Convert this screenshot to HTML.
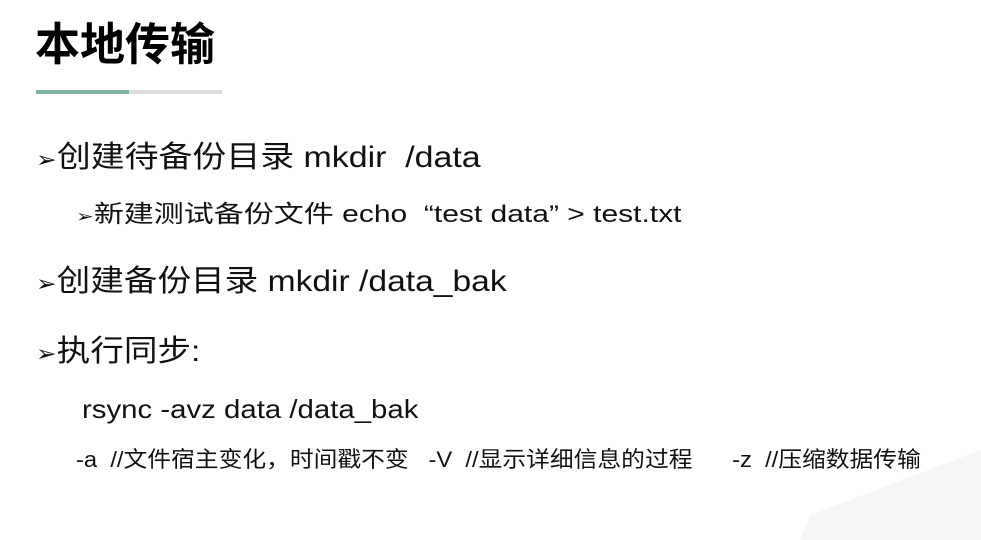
<!DOCTYPE html>
<html><head><meta charset="utf-8"><style>
html,body{margin:0;width:981px;height:540px;overflow:hidden}
body{background:#fff;position:relative;font-family:"Liberation Sans","Noto Sans CJK SC",sans-serif;color:#111}
.t{position:absolute;white-space:nowrap;line-height:1;transform-origin:left center}
.a{font-family:"DejaVu Sans",sans-serif;font-weight:bold}
</style></head><body>
<svg style="position:absolute;left:0;top:0" width="981" height="540"><polygon points="800,540 810,515 981,450 981,540" fill="#f6f6f6"/></svg>
<div class="t" style="left:35px;top:22px;font-size:45px;font-weight:bold;color:#000">本地传输</div>
<div style="position:absolute;left:36px;top:90px;width:93px;height:4px;background:#7fb5a5"></div>
<div style="position:absolute;left:129px;top:90px;width:93px;height:4px;background:#dedede"></div>
<div class="t" style="left:36px;top:143px;font-size:30px;transform:scaleX(1.13)"><span class="a" style="font-size:22px">➢</span>创建待备份目录 mkdir&nbsp; /data</div>
<div class="t" style="left:76px;top:203px;font-size:24px;transform:scaleX(1.25)"><span class="a" style="font-size:17px">➢</span>新建测试备份文件 echo&nbsp; “test data” &gt; test.txt</div>
<div class="t" style="left:36px;top:267px;font-size:30px;transform:scaleX(1.12)"><span class="a" style="font-size:22px">➢</span>创建备份目录 mkdir /data_bak</div>
<div class="t" style="left:36px;top:337px;font-size:30px;transform:scaleX(1.12)"><span class="a" style="font-size:22px">➢</span>执行同步:</div>
<div class="t" style="left:82px;top:396px;font-size:26px;transform:scaleX(1.13)">rsync -avz data /data_bak</div>
<div class="t" style="left:76px;top:449px;font-size:22px;transform:scaleX(1.08)">-a&nbsp; //文件宿主变化，时间戳不变&nbsp;&nbsp; -V&nbsp; //显示详细信息的过程&nbsp;&nbsp;&nbsp;&nbsp;&nbsp; -z&nbsp; //压缩数据传输</div>
</body></html>
